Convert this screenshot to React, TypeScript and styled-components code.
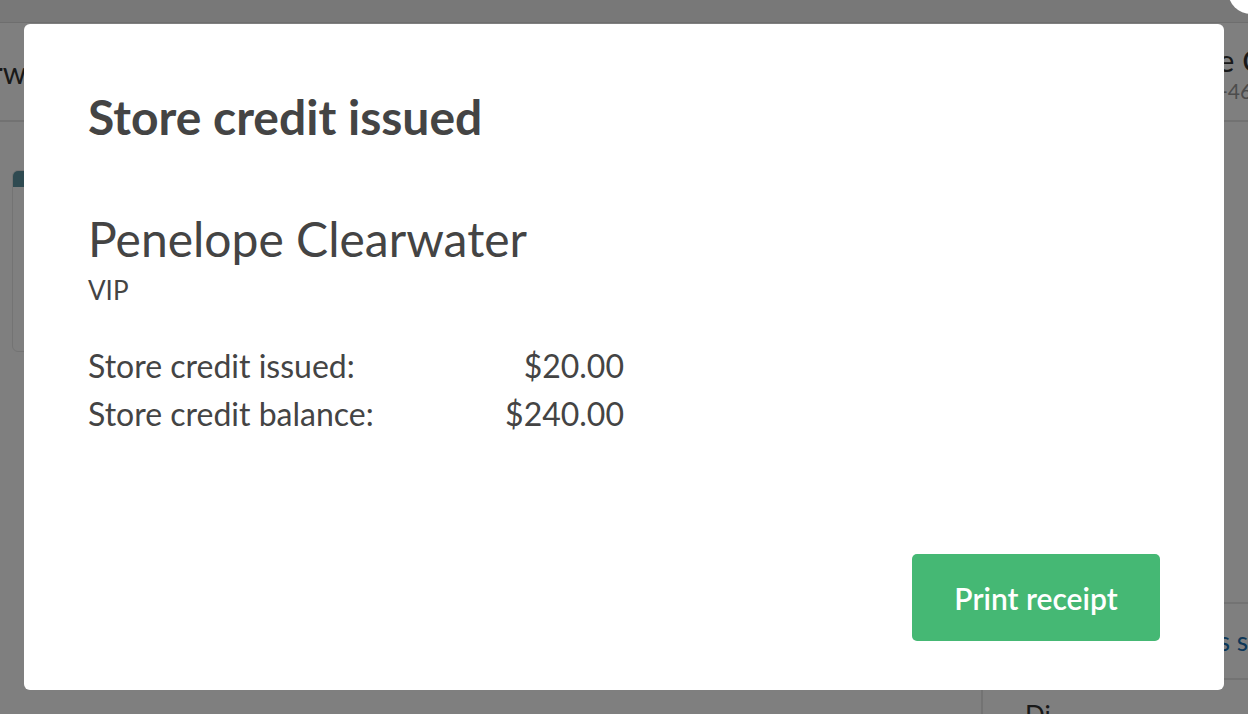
import React from "react";
import styled, { createGlobalStyle } from "styled-components";

const Global = createGlobalStyle`
  html, body { margin: 0; padding: 0; }
  body {
    font-family: Lato, "Open Sans", Arial, sans-serif;
    color: #444;
    background: #fff;
    width: 1248px;
    height: 714px;
    overflow: hidden;
  }
  * { box-sizing: border-box; }
`;

const Page = styled.div`
  width: 1248px;
  height: 714px;
  display: flex;
  flex-direction: column;
  background: #fff;
`;

const TopBar = styled.div`
  height: 23px;
  flex: none;
  background: #f1f1f1;
  border-bottom: 1px solid #dcdcdc;
`;

const Header = styled.div`
  height: 99px;
  flex: none;
  display: flex;
  justify-content: space-between;
  align-items: center;
  border-bottom: 2px solid #e4e4e4;
  overflow: hidden;
`;

const HeaderLeft = styled.div`
  font-size: 30px;
  color: #333;
  margin-left: -66px;
  white-space: nowrap;
`;

const HeaderRight = styled.div`
  width: 30px;
  flex: none;
  display: flex;
  flex-direction: column;
  white-space: nowrap;
  overflow: hidden;
`;

const HeaderName = styled.div`
  font-size: 31px;
  color: #333;
  line-height: 38px;
`;

const HeaderSub = styled.div`
  font-size: 21px;
  color: #999;
  line-height: 24px;
  padding-left: 2px;
`;

const Body = styled.div`
  flex: 1;
  display: flex;
`;

const Main = styled.div`
  flex: 1;
  padding: 48px 0 0 12px;
`;

const Card = styled.div`
  width: 200px;
  height: 182px;
  border: 1px solid #e6e6e6;
  border-radius: 6px;
  overflow: hidden;
`;

const CardTop = styled.div`
  height: 16px;
  background: #5e95a2;
`;

const Side = styled.div`
  width: 267px;
  flex: none;
  border-left: 2px solid #e6e6e6;
  display: flex;
  flex-direction: column;
  justify-content: flex-end;
`;

const SideLink = styled.div`
  height: 78px;
  border-top: 2px solid #e6e6e6;
  border-bottom: 2px solid #e6e6e6;
  display: flex;
  align-items: center;
  justify-content: flex-end;
  font-size: 26px;
  color: #1a6fb0;
  white-space: nowrap;
  overflow: hidden;
`;

const SideItem = styled.div`
  height: 34px;
  padding: 22px 0 0 42px;
  font-size: 26px;
  color: #333;
  overflow: hidden;
  line-height: 26px;
`;

const Overlay = styled.div`
  position: fixed;
  inset: 0;
  background: rgba(0, 0, 0, 0.5);
  padding: 24px;
  display: flex;
`;

const CloseDot = styled.div`
  position: fixed;
  top: -32px;
  right: -26px;
  width: 46px;
  height: 46px;
  border-radius: 50%;
  background: #fff;
`;

const Modal = styled.div`
  flex: 1;
  background: #fff;
  border-radius: 6px;
  padding: 65px 64px 49px 64px;
  display: flex;
  flex-direction: column;
`;

const Title = styled.h1`
  margin: 0;
  font-size: 48px;
  font-weight: 700;
  line-height: 56px;
  color: #444;
`;

const Name = styled.div`
  margin-top: 66px;
  font-size: 48px;
  line-height: 56px;
  color: #444;
`;

const Tag = styled.div`
  margin-top: 8px;
  font-size: 26px;
  line-height: 30px;
  color: #444;
`;

const Rows = styled.div`
  margin-top: 37px;
  width: 536px;
  display: flex;
  flex-direction: column;
`;

const Row = styled.div`
  display: flex;
  justify-content: space-between;
  font-size: 32px;
  line-height: 48px;
  color: #444;
`;

const Footer = styled.div`
  margin-top: auto;
  display: flex;
  justify-content: flex-end;
`;

const Button = styled.button`
  width: 248px;
  height: 87px;
  border: none;
  border-radius: 5px;
  background: #45b874;
  color: #fff;
  font-family: Lato, "Open Sans", Arial, sans-serif;
  font-size: 30px;
  font-weight: 600;
  cursor: pointer;
`;

export default function App() {
  return (
    <>
      <Global />
      <Page>
        <TopBar />
        <Header>
          <HeaderLeft>Clearwater</HeaderLeft>
          <HeaderRight>
            <HeaderName>e Clearwater</HeaderName>
            <HeaderSub>-4600</HeaderSub>
          </HeaderRight>
        </Header>
        <Body>
          <Main>
            <Card>
              <CardTop />
            </Card>
          </Main>
          <Side>
            <SideLink>Previous s</SideLink>
            <SideItem>Di</SideItem>
          </Side>
        </Body>
      </Page>
      <Overlay>
        <Modal>
          <Title>Store credit issued</Title>
          <Name>Penelope Clearwater</Name>
          <Tag>VIP</Tag>
          <Rows>
            <Row>
              <span>Store credit issued:</span>
              <span>$20.00</span>
            </Row>
            <Row>
              <span>Store credit balance:</span>
              <span>$240.00</span>
            </Row>
          </Rows>
          <Footer>
            <Button>Print receipt</Button>
          </Footer>
        </Modal>
      </Overlay>
      <CloseDot />
    </>
  );
}
